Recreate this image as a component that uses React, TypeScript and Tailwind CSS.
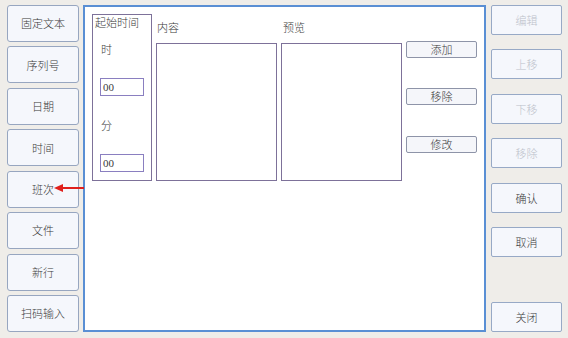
import React from 'react';

const font = { fontFamily: '"Noto Sans CJK SC", "Liberation Serif", serif' };

const leftItems = ['固定文本', '序列号', '日期', '时间', '班次', '文件', '新行', '扫码输入'];

const rightItems: { label: string; disabled: boolean; cls: string }[] = [
    { label: '编辑', disabled: true, cls: '' },
    { label: '上移', disabled: true, cls: 'mt-[14px]' },
    { label: '下移', disabled: true, cls: 'mt-[15px]' },
    { label: '移除', disabled: true, cls: 'mt-[14px]' },
    { label: '确认', disabled: false, cls: 'mt-[15px]' },
    { label: '取消', disabled: false, cls: 'mt-[14px]' },
    { label: '关闭', disabled: false, cls: 'mt-auto' },
];

const App: React.FC = () => {
    return (
        <div
            style={font}
            className="relative flex h-[338px] w-[568px] gap-[4px] bg-[#efede9] pt-[5px] pb-[6px] pl-[7px] pr-[6px] text-[11px] font-light text-[#3a3a3a]"
        >
            {/* left column */}
            <div className="flex w-[72px] flex-col justify-between">
                {leftItems.map((label) => (
                    <button
                        key={label}
                        className="flex h-[37px] items-center justify-center rounded-[3px] border border-[#97a6c0] bg-[#f5f7fc] text-[11px] text-[#3a3a3a]"
                    >
                        {label}
                    </button>
                ))}
            </div>

            {/* main panel */}
            <div className="w-[403px] border-2 border-[#5a8fd4] bg-white pl-[7px] pt-[7px]">
                <div className="flex gap-[4px]">
                    {/* start time group */}
                    <div className="flex h-[167px] w-[60px] flex-col border border-[#7d7199] pl-[7px]">
                        <div className="-ml-[5px] h-[14px] leading-[14px]">起始时间</div>
                        <div className="mt-[13px] h-[14px] pl-[1px] leading-[14px]">时</div>
                        <div className="mt-[22px] h-[18px] w-[44px] border border-[#8a7fc0] pl-[2px] text-[11px] leading-[16px]" style={{ fontFamily: '"Liberation Serif", serif' }}>
                            00
                        </div>
                        <div className="mt-[22px] h-[14px] pl-[1px] leading-[14px]">分</div>
                        <div className="mt-[22px] h-[18px] w-[44px] border border-[#8a7fc0] pl-[2px] text-[11px] leading-[16px]" style={{ fontFamily: '"Liberation Serif", serif' }}>
                            00
                        </div>
                    </div>

                    {/* content */}
                    <div className="flex w-[121px] flex-col">
                        <div className="h-[29px] pl-[1px] pt-[6px] leading-[14px]">内容</div>
                        <div className="h-[138px] border border-[#7d7199]" />
                    </div>

                    {/* preview */}
                    <div className="flex w-[121px] flex-col">
                        <div className="h-[29px] pl-[2px] pt-[6px] leading-[14px]">预览</div>
                        <div className="h-[138px] border border-[#7d7199]" />
                    </div>

                    {/* action buttons */}
                    <div className="flex w-[71px] flex-col pt-[27px]">
                        <button className="h-[17px] rounded-[2px] border border-[#8e94a8] bg-[#f5f6fa] text-[11px] leading-[15px] text-[#3a3a3a]">添加</button>
                        <button className="mt-[30px] h-[17px] rounded-[2px] border border-[#8e94a8] bg-[#f5f6fa] text-[11px] leading-[15px] text-[#3a3a3a]">移除</button>
                        <button className="mt-[31px] h-[17px] rounded-[2px] border border-[#8e94a8] bg-[#f5f6fa] text-[11px] leading-[15px] text-[#3a3a3a]">修改</button>
                    </div>
                </div>
            </div>

            {/* right column */}
            <div className="ml-[1px] flex w-[71px] flex-col">
                {rightItems.map((item) => (
                    <button
                        key={item.label}
                        className={`${item.cls} flex h-[30px] items-center justify-center rounded-[2px] border border-[#97a9c6] bg-[#f5f7fc] text-[11px] ${item.disabled ? 'text-[#bcc1ca]' : 'text-[#3a3a3a]'}`}
                    >
                        {item.label}
                    </button>
                ))}
            </div>

            {/* red arrow pointing at 班次 */}
            <svg className="absolute left-[54px] top-[183px]" width="31" height="10" viewBox="0 0 31 10">
                <line x1="5" y1="5" x2="30" y2="5" stroke="#e0201c" strokeWidth="2" />
                <polygon points="0,5 9,1 9,9" fill="#e0201c" />
            </svg>
        </div>
    );
};

export default App;
